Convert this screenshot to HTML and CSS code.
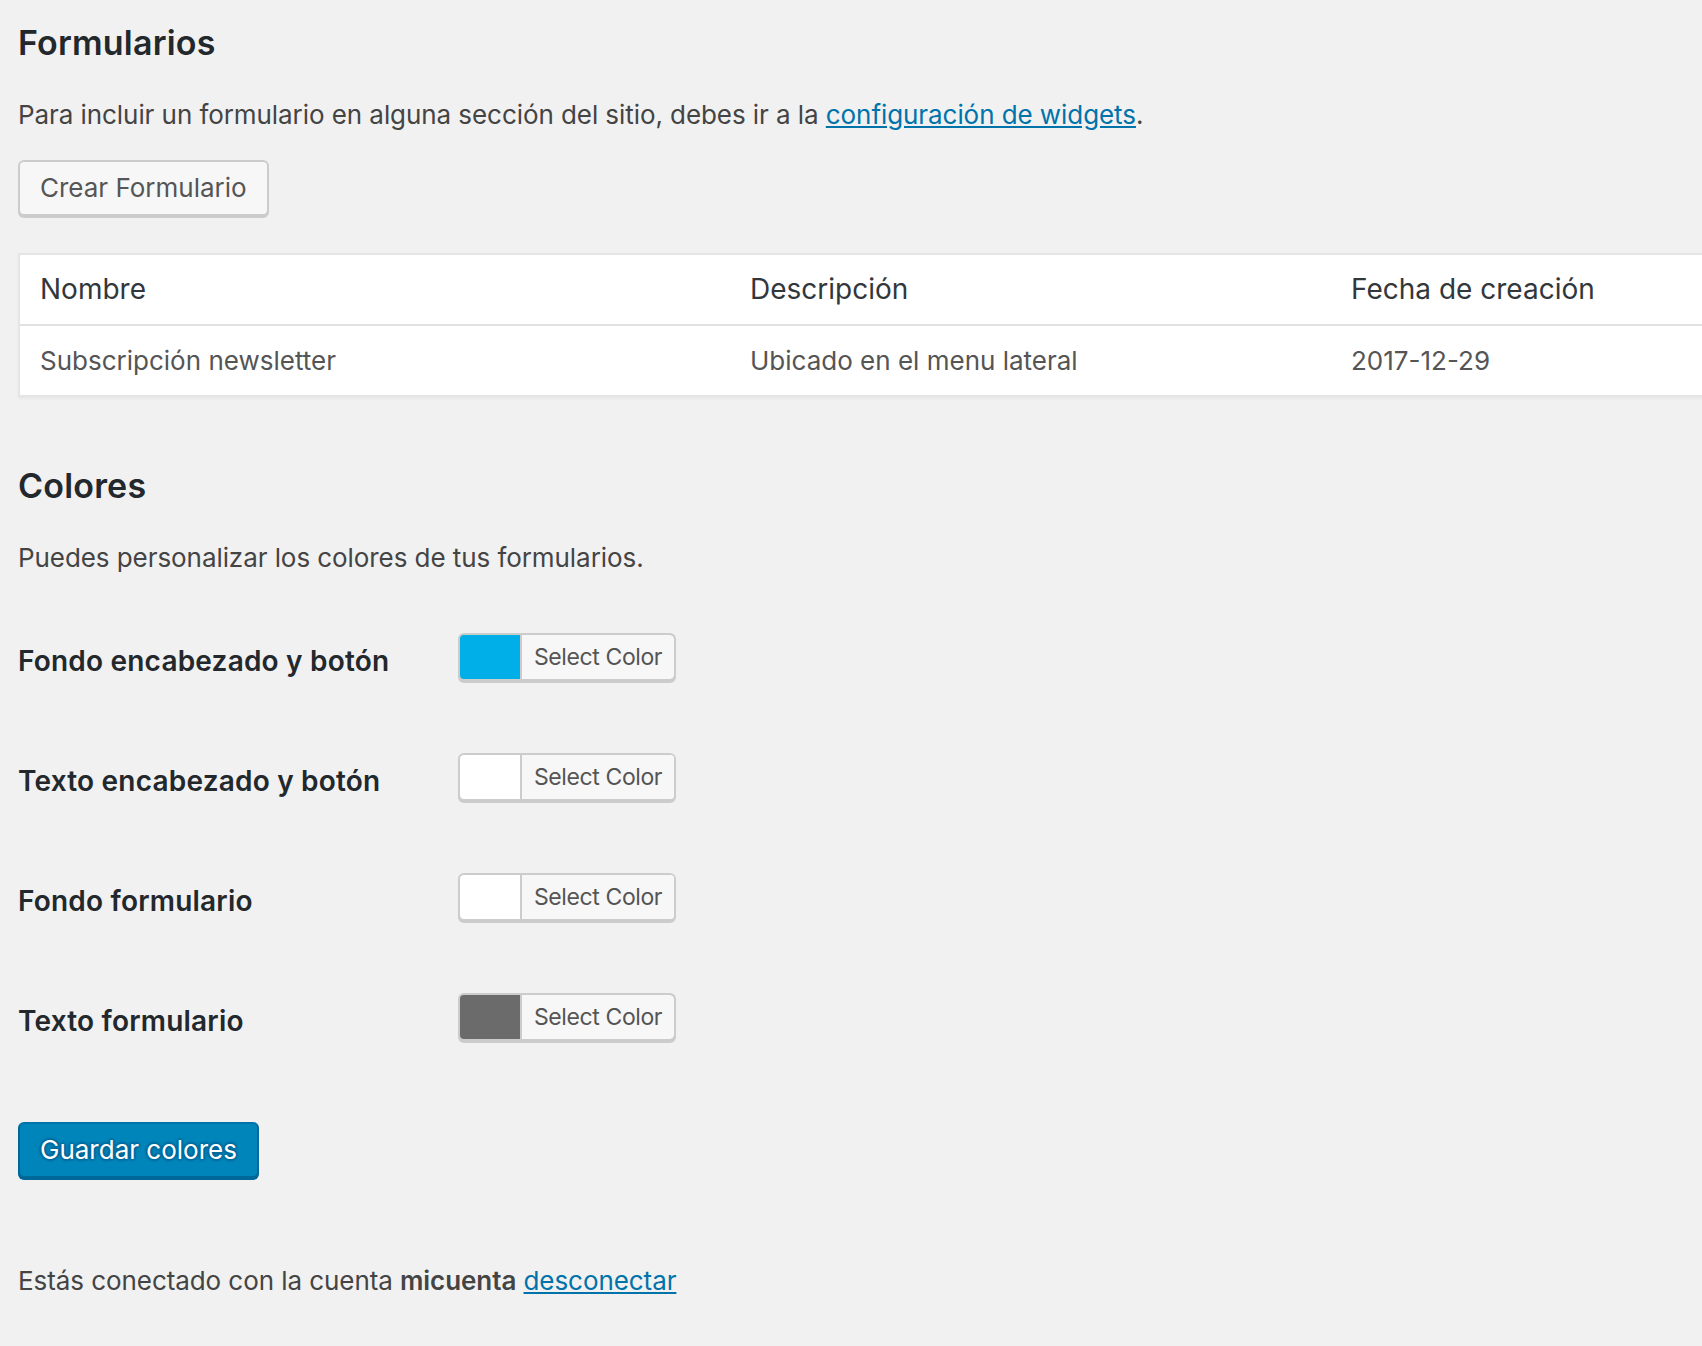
FILE: index.html
```html
<!DOCTYPE html>
<html lang="es">
<head>
<meta charset="utf-8">
<title>Formularios</title>
<link rel="stylesheet" href="styles.css">
</head>
<body>
<div class="wrap">
  <h2 class="title">Formularios</h2>
  <p class="text">Para incluir un formulario en alguna sección del sitio, debes ir a la <a href="#">configuración de widgets</a>.</p>
  <p class="actions"><a class="button" href="#">Crear Formulario</a></p>
  <table class="widefat">
    <colgroup><col class="c1"><col class="c2"><col class="c3"></colgroup>
    <thead>
      <tr><th>Nombre</th><th>Descripción</th><th>Fecha de creación</th></tr>
    </thead>
    <tbody>
      <tr><td>Subscripción newsletter</td><td>Ubicado en el menu lateral</td><td>2017-12-29</td></tr>
    </tbody>
  </table>

  <h2 class="title colores">Colores</h2>
  <p class="text">Puedes personalizar los colores de tus formularios.</p>

  <table class="form-table">
    <tbody>
      <tr>
        <th>Fondo encabezado y botón</th>
        <td><div class="picker"><button type="button" class="color-result sw-blue"><span class="color-text">Select Color</span></button></div></td>
      </tr>
      <tr>
        <th>Texto encabezado y botón</th>
        <td><div class="picker"><button type="button" class="color-result sw-white"><span class="color-text">Select Color</span></button></div></td>
      </tr>
      <tr>
        <th>Fondo formulario</th>
        <td><div class="picker"><button type="button" class="color-result sw-white"><span class="color-text">Select Color</span></button></div></td>
      </tr>
      <tr>
        <th>Texto formulario</th>
        <td><div class="picker"><button type="button" class="color-result sw-gray"><span class="color-text">Select Color</span></button></div></td>
      </tr>
    </tbody>
  </table>

  <p class="submit"><button type="button" class="button button-primary">Guardar colores</button></p>

  <p class="text footer">Estás conectado con la cuenta <strong>micuenta</strong> <a href="#">desconectar</a></p>
</div>
</body>
</html>
```

FILE: styles.css
```css
html, body {
  margin: 0;
  padding: 0;
  background: #f1f1f1;
  overflow: hidden;
}

body {
  font-family: Inter, "Noto Sans", sans-serif;
  font-size: 26px;
  line-height: 36.4px;
  color: #444;
}

.wrap {
  padding: 25px 0 0 18px;
}

a {
  color: #0073aa;
  text-decoration: underline;
}

.title {
  margin: 0 0 34px;
  font-size: 34px;
  line-height: 36px;
  font-weight: 600;
  letter-spacing: 0.2px;
  color: #23282d;
}

.colores {
  margin-top: 71px;
}

.text {
  margin: 0 0 26px;
  line-height: 39px;
  letter-spacing: -0.07px;
}

.actions {
  display: flex;
  margin: 0 0 37px;
}

.button {
  display: inline-block;
  box-sizing: border-box;
  height: 56px;
  margin: 0;
  padding: 0 20px 2px;
  font-family: inherit;
  font-size: 26px;
  line-height: 52px;
  color: #555;
  text-decoration: none;
  background: #f7f7f7;
  border: 2px solid #ccc;
  border-radius: 6px;
  box-shadow: 0 2px 0 #ccc;
  cursor: pointer;
  white-space: nowrap;
}

.button-primary {
  background: #0085ba;
  border-color: #0073aa #006799 #006799;
  box-shadow: 0 2px 0 #006799;
  color: #fff;
  text-shadow: 0 -2px 2px #006799, 2px 0 2px #006799, 0 2px 2px #006799, -2px 0 2px #006799;
}

/* list table */
.widefat {
  width: 1800px;
  table-layout: fixed;
  border-collapse: separate;
  border-spacing: 0;
  background: #fff;
  border: 2px solid #e5e5e5;
  box-shadow: 0 2px 2px rgba(0, 0, 0, 0.04);
}

.widefat .c1 { width: 710px; }
.widefat .c2 { width: 601px; }

.widefat th {
  padding: 15px 20px;
  font-size: 28px;
  line-height: 39px;
  font-weight: 400;
  text-align: left;
  color: #32373c;
  border-bottom: 2px solid #e1e1e1;
}

.widefat td {
  padding: 15px 20px;
  font-size: 26px;
  line-height: 39px;
  color: #555;
}

/* form table */
.form-table {
  border-collapse: collapse;
  margin: 0;
}

.form-table th {
  width: 400px;
  padding: 40px 20px 40px 0;
  font-size: 28px;
  line-height: 36.4px;
  font-weight: 600;
  letter-spacing: 0.2px;
  color: #23282d;
  text-align: left;
  vertical-align: top;
}

.form-table td {
  padding: 30px 20px;
  line-height: 36.4px;
  vertical-align: middle;
}

.picker {
  display: flex;
}

.color-result {
  display: flex;
  box-sizing: border-box;
  height: 48px;
  margin: 0 12px 12px 0;
  padding: 0 0 0 60px;
  border: 2px solid #ccc;
  border-radius: 6px;
  box-shadow: 0 2px 0 #ccc;
  font-family: inherit;
  cursor: pointer;
}

.sw-blue { background-color: #00aee8; }
.sw-white { background-color: #ffffff; }
.sw-gray { background-color: #6b6b6b; }

.color-text {
  display: block;
  padding: 0 12px;
  font-size: 23px;
  letter-spacing: -0.4px;
  line-height: 44px;
  color: #555;
  background: #f7f7f7;
  border-left: 2px solid #ccc;
  border-radius: 0 4px 4px 0;
}

.submit {
  display: flex;
  margin: 0;
  padding: 39px 0;
}

.footer {
  margin-top: 44px;
}

.footer strong {
  font-weight: 600;
}
```
